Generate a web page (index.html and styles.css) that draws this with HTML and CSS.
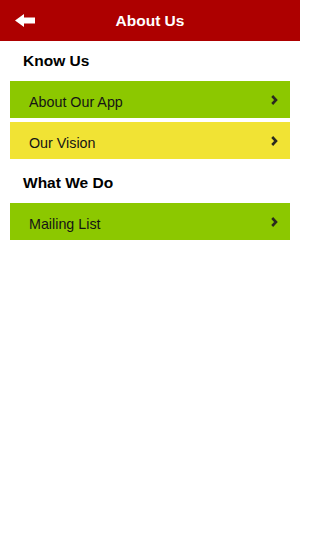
FILE: index.html
```html
<!DOCTYPE html>
<html>
<head>
<meta charset="utf-8">
<link rel="stylesheet" href="styles.css">
</head>
<body>
<header class="topbar">
  <span class="back">
    <svg width="21" height="13" viewBox="0 0 21 13"><path d="M0 6.5 L9 0 L9 3.5 L20 3.5 L20 9.5 L9 9.5 L9 13 Z" fill="#fff"/></svg>
  </span>
  <h1 class="title">About Us</h1>
</header>
<main>
  <h2 class="section">Know Us</h2>
  <div class="row green"><span>About Our App</span><svg class="chev" width="7" height="10" viewBox="0 0 7 10"><path d="M1.2 1 L5 5 L1.2 9" fill="none" stroke="#2a2a1e" stroke-width="2.6"/></svg></div>
  <div class="row yellow"><span>Our Vision</span><svg class="chev" width="7" height="10" viewBox="0 0 7 10"><path d="M1.2 1 L5 5 L1.2 9" fill="none" stroke="#2a2a1e" stroke-width="2.6"/></svg></div>
  <h2 class="section">What We Do</h2>
  <div class="row green"><span>Mailing List</span><svg class="chev" width="7" height="10" viewBox="0 0 7 10"><path d="M1.2 1 L5 5 L1.2 9" fill="none" stroke="#2a2a1e" stroke-width="2.6"/></svg></div>
</main>
</body>
</html>
```
FILE: styles.css
```css
* { box-sizing: border-box; }
html, body { margin: 0; padding: 0; background: #fff; }
body { font-family: "Liberation Sans", Arial, sans-serif; width: 300px; }
.topbar {
  height: 41px;
  background: #ad0000;
  display: flex;
  align-items: center;
  justify-content: center;
  position: relative;
}
.back {
  position: absolute;
  left: 15px;
  top: 14px;
  display: block;
  line-height: 0;
}
.title {
  margin: 0;
  color: #fff;
  font-size: 15.5px;
  font-weight: bold;
}
.section {
  margin: 0;
  height: 40px;
  line-height: 40px;
  padding-left: 23px;
  font-size: 15.5px;
  font-weight: bold;
  color: #000;
}
.row {
  margin: 0 10px 4px;
  height: 37px;
  display: flex;
  align-items: center;
  justify-content: space-between;
  padding: 5px 12px 0 19px;
  font-size: 14.3px;
  color: #151515;
}
.row .chev { margin-top: -4px; }
.green { background: #8cc800; }
.yellow { background: #f1e334; }
.chev { display: block; }
```
